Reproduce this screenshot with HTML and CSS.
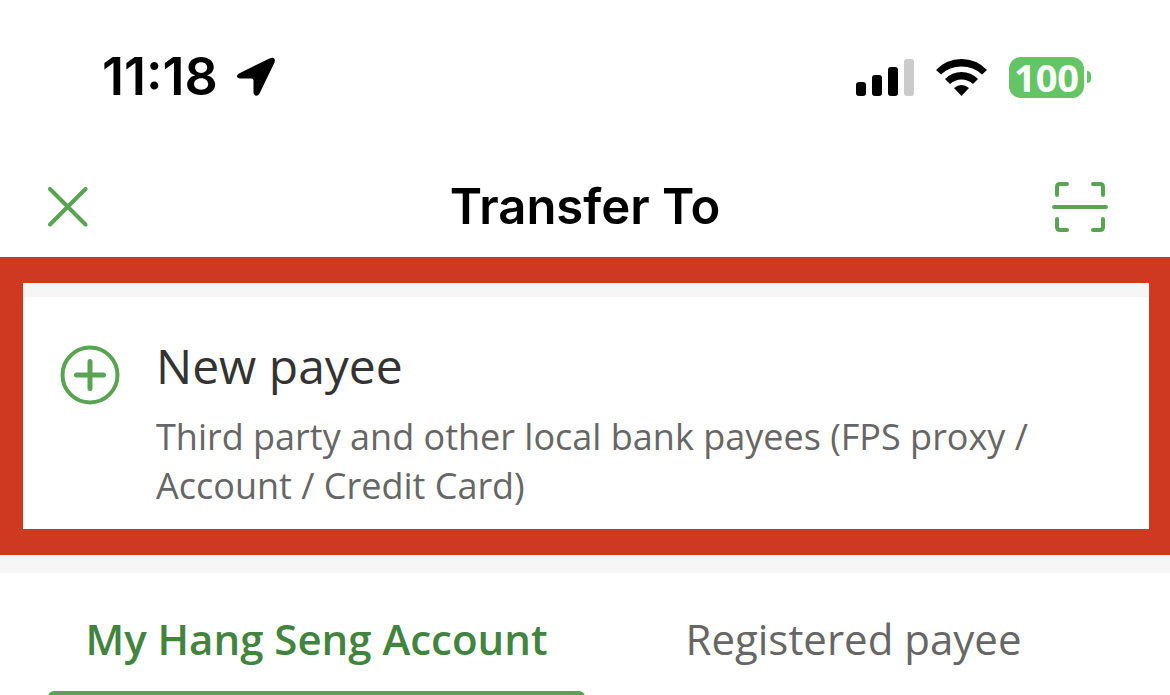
FILE: index.html
```html
<!DOCTYPE html>
<html lang="en">
<head>
  <meta charset="UTF-8" />
  <meta name="viewport" content="width=device-width, initial-scale=1.0"/>
  <title>Transfer To</title>
  <link rel="stylesheet" href="styles.css">
</head>
<body>

<div class="status-bar">
  <div class="status-left">
    <span class="time">11:18</span>
    <svg class="location" width="40" height="40" viewBox="0 0 40 40" aria-hidden="true">
      <path d="M3 16.500 34 1.200Q40-.5 38.500 5.500L23.500 36.500Q20.500 41 17.500 36.500V23.500Q17.500 21.500 15.500 21.500H3.500Q-1.500 20 3 16.500Z"/>
    </svg>
  </div>
  <div class="status-right">
    <svg width="58" height="38" viewBox="0 0 58 38" aria-hidden="true">
      <rect x="0" y="24" width="10" height="14" rx="3"/>
      <rect x="16" y="17" width="10" height="21" rx="3"/>
      <rect x="32" y="9" width="10" height="29" rx="3"/>
      <rect x="48" y="1" width="10" height="37" rx="3" fill="#cbcbcb"/>
    </svg>
    <svg width="51" height="38" viewBox="0 0 51 38" aria-hidden="true">
      <path d="M0 12Q10.500 1 25.500 1T51 12L46 16.500Q37.500 8.500 25.500 8.500T5 16.500Z"/>
      <path d="M9 21Q16 14 25.500 14T42 21L37 26Q32 21.500 25.500 21.500T14 26Z"/>
      <path d="M18 30Q25.500 24 33 30L25.500 38Z"/>
    </svg>
    <div class="battery"><span class="battery-level">100</span><span class="battery-tip"></span></div>
  </div>
</div>

<header class="nav-bar">
  <button type="button" class="icon-btn" aria-label="Close">
    <svg width="40" height="40" viewBox="0 0 40 40">
      <path d="M2 2 37.500 37.500M37.500 2 2 37.500"/>
    </svg>
  </button>
  <h1>Transfer To</h1>
  <button type="button" class="icon-btn" aria-label="Scan QR code">
    <svg width="56" height="50" viewBox="0 0 56 50">
      <path d="M5 13V5Q5 2 8 2H15M41 2H48Q51 2 51 5V13M5 37V45Q5 48 8 48H15M41 48H48Q51 48 51 45V37M2 25H54"/>
    </svg>
  </button>
</header>

<main>
  <section class="highlight">
    <a href="#" class="new-payee">
      <svg class="plus" width="60" height="60" viewBox="0 0 60 60" aria-hidden="true">
        <circle cx="30" cy="30" r="27.500"/>
        <path d="M30 16.500V43.500M16.500 30H43.500" stroke-width="5"/>
      </svg>
      <span class="payee-text">
        <span class="payee-title">New payee</span>
        <span class="payee-desc">Third party and other local bank payees (FPS proxy / Account / Credit Card)</span>
      </span>
    </a>
  </section>

  <nav class="tabs">
    <a href="#" class="tab active" aria-current="page">My Hang Seng Account</a>
    <a href="#" class="tab">Registered payee</a>
  </nav>
</main>

</body>
</html>
```

FILE: styles.css
```css
* {
  box-sizing: border-box;
}

body {
  margin: 0;
  font-family: "Open Sans", sans-serif;
  background-color: #fff;
  overflow: hidden;
}

a {
  text-decoration: none;
}

/* phone status bar */
.status-bar {
  display: flex;
  justify-content: space-between;
  align-items: center;
  padding: 47px 79px 50px 102px;
  font-family: Inter, sans-serif;
}

.status-left {
  display: flex;
  align-items: center;
  gap: 18px;
}

.time {
  font-size: 52px;
  line-height: 60px;
  font-weight: 600;
}

.status-right {
  display: flex;
  align-items: center;
  gap: 22px;
}

.battery {
  display: flex;
  align-items: center;
  gap: 3px;
}

.battery-level {
  width: 75px;
  border-radius: 12px;
  background: #65c466;
  color: #fff;
  font-family: "Open Sans", sans-serif;
  font-size: 38px;
  line-height: 41px;
  font-weight: 700;
  text-align: center;
}

.battery-tip {
  width: 4px;
  height: 12px;
  border-radius: 0 6px 6px 0;
  background: #65c466;
}

.nav-bar {
  display: flex;
  align-items: center;
  height: 100px;
  padding: 0 48px;
}

.nav-bar h1 {
  flex: 1;
  margin: 0;
  font-family: Inter, sans-serif;
  font-size: 49px;
  line-height: 60px;
  font-weight: 600;
  text-align: center;
}

.icon-btn {
  display: flex;
  width: 70px;
  padding: 0;
  border: none;
  background: none;
  cursor: pointer;
}

.icon-btn svg,
.plus {
  fill: none;
  stroke: #59a353;
  stroke-width: 4;
  stroke-linecap: round;
}

.highlight {
  border: solid #cf3921;
  border-width: 26px 21px 26px 23px;
}

.new-payee {
  display: flex;
  gap: 36px;
  padding: 34px 37px 19px;
  border-top: 14px solid #f6f6f6;
}

.plus {
  flex: none;
  margin-top: 14px;
}

.payee-text {
  display: flex;
  flex-direction: column;
  gap: 11px;
}

.payee-title {
  font-size: 48px;
  line-height: 70px;
  color: #333;
}

.payee-desc {
  font-size: 36px;
  line-height: 49px;
  color: #666;
}

.tabs {
  display: flex;
  padding: 0 48px;
  border-top: 18px solid #f6f6f6;
}

.tab {
  flex: 1;
  padding-top: 36px;
  font-size: 42px;
  line-height: 60px;
  color: #666;
  text-align: center;
}

.tab.active {
  color: #438340;
  font-weight: 600;
}

.tab.active::after {
  content: "";
  display: block;
  height: 8px;
  margin-top: 22px;
  border-radius: 6px 6px 0 0;
  background: #59a353;
}
```
